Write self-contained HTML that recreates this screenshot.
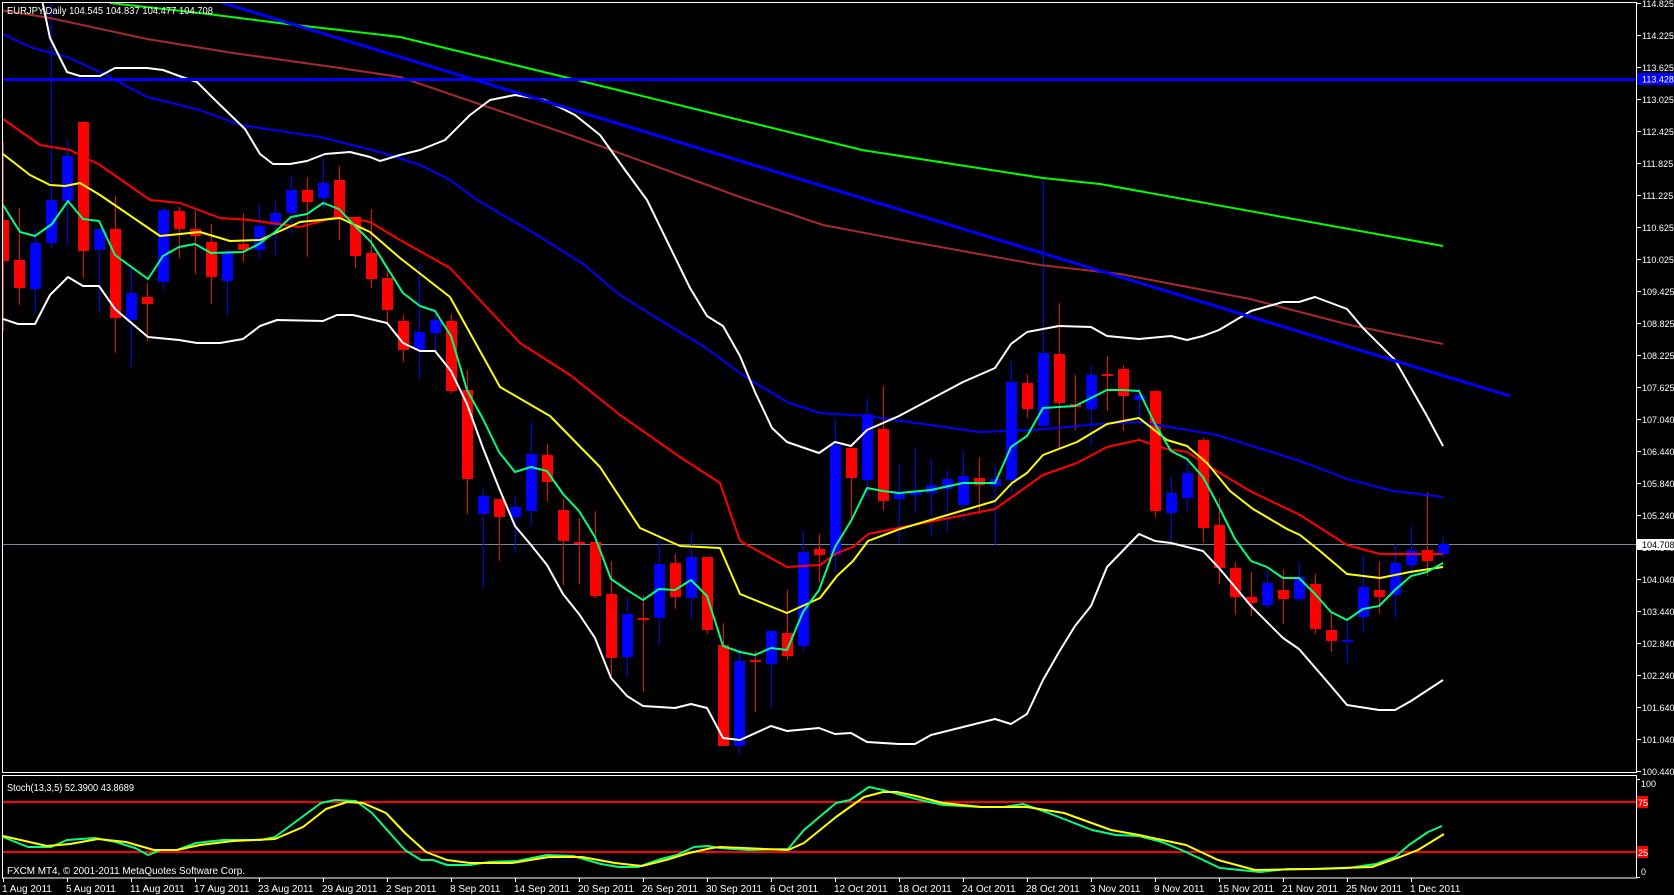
<!DOCTYPE html>
<html><head><meta charset="utf-8"><style>
html,body{margin:0;padding:0;background:#000;overflow:hidden}
svg{display:block}
text{font-family:"Liberation Sans",sans-serif;fill:#fff}
</style></head><body>
<svg width="1674" height="895" viewBox="0 0 1674 895" xmlns="http://www.w3.org/2000/svg">
<rect width="1674" height="895" fill="#000"/>
<defs><clipPath id="mc"><rect x="3" y="3" width="1633" height="769"/></clipPath></defs>
<g clip-path="url(#mc)">
<line x1="2" y1="544.5" x2="1636" y2="544.5" stroke="#778899" stroke-width="1"/>
<path stroke="#ff0000" stroke-width="1" fill="none" d="M3.5 142V331M19.5 208V305M83.5 121V278M115.5 196V353M147.5 283V341M179.5 207V258M195.5 211V274M211.5 224V304M243.5 213V262M307.5 177V257M339.5 166V240M355.5 217V268M371.5 209V288M387.5 267V323M403.5 315V362M451.5 314V393M467.5 370V514M499.5 499V561M547.5 444V501M563.5 499V585M579.5 518V584M595.5 511V598M611.5 561V676M643.5 595V692M675.5 554V609M707.5 557V634M723.5 623V746M755.5 651V712M787.5 590V660M819.5 534V582M851.5 448V519M883.5 386V511M979.5 457V514M1027.5 375V418M1059.5 303V448M1075.5 375V430M1107.5 356V411M1123.5 365V431M1155.5 390V517M1203.5 438V543M1219.5 498V584M1235.5 562V615M1251.5 572V616M1283.5 570V624M1315.5 574V634M1331.5 611V652M1379.5 561V613M1427.5 492V576"/>
<path stroke="#0000ff" stroke-width="1" fill="none" d="M35.5 230V313M51.5 0V248M67.5 140V245M99.5 229V312M131.5 268V367M163.5 207V290M227.5 249V315M259.5 204V259M275.5 201V256M291.5 175V234M323.5 159V209M419.5 264V379M435.5 309V351M483.5 489V588M515.5 497V553M531.5 422V525M627.5 597V677M659.5 532V645M691.5 533V619M739.5 647V755M771.5 630V708M803.5 530V651M835.5 419V572M867.5 398V498M899.5 464V543M915.5 447V513M931.5 459V536M947.5 470V532M963.5 451V521M995.5 467V545M1011.5 361V493M1043.5 178V426M1091.5 365V446M1139.5 388V420M1171.5 477V543M1187.5 459V511M1267.5 570V609M1299.5 563V601M1347.5 622V664M1363.5 555V633M1395.5 544V618M1411.5 526V574M1443.5 537V557"/>
<path fill="#ff0000" d="M-2 220h11v41h-11zM14 260h11v28h-11zM78 122h11v129h-11zM110 229h11v89h-11zM142 297h11v7h-11zM174 211h11v18h-11zM190 229h11v7h-11zM206 242h11v35h-11zM238 244h11v6h-11zM302 190h11v12h-11zM334 180h11v37h-11zM350 217h11v39h-11zM366 253h11v26h-11zM382 278h11v32h-11zM398 321h11v29h-11zM446 321h11v70h-11zM462 390h11v89h-11zM494 499h11v18h-11zM542 455h11v27h-11zM558 510h11v31h-11zM574 542h11v2h-11zM590 542h11v54h-11zM606 594h11v64h-11zM638 618h11v2h-11zM670 563h11v34h-11zM702 557h11v73h-11zM718 645h11v101h-11zM750 660h11v2h-11zM782 633h11v23h-11zM814 549h11v6h-11zM846 448h11v30h-11zM878 429h11v72h-11zM974 478h11v7h-11zM1022 383h11v26h-11zM1054 354h11v49h-11zM1070 404h11v3h-11zM1102 374h11v2h-11zM1118 369h11v27h-11zM1150 391h11v120h-11zM1198 440h11v88h-11zM1214 525h11v43h-11zM1230 568h11v29h-11zM1246 597h11v6h-11zM1278 590h11v9h-11zM1310 584h11v45h-11zM1326 630h11v11h-11zM1374 590h11v7h-11zM1422 550h11v11h-11z"/>
<path fill="#0000ff" d="M30 243h11v46h-11zM46 200h11v43h-11zM62 156h11v45h-11zM94 229h11v21h-11zM126 293h11v27h-11zM158 210h11v72h-11zM222 253h11v28h-11zM254 226h11v24h-11zM270 213h11v12h-11zM286 190h11v23h-11zM318 183h11v15h-11zM414 332h11v18h-11zM430 320h11v13h-11zM478 496h11v18h-11zM510 507h11v10h-11zM526 454h11v57h-11zM622 614h11v43h-11zM654 564h11v54h-11zM686 557h11v41h-11zM734 661h11v85h-11zM766 631h11v33h-11zM798 552h11v94h-11zM830 445h11v110h-11zM862 414h11v66h-11zM894 493h11v6h-11zM910 492h11v3h-11zM926 485h11v8h-11zM942 479h11v10h-11zM958 476h11v29h-11zM990 479h11v7h-11zM1006 382h11v98h-11zM1038 353h11v73h-11zM1086 375h11v34h-11zM1134 395h11v5h-11zM1166 493h11v20h-11zM1182 473h11v25h-11zM1262 583h11v22h-11zM1294 577h11v22h-11zM1342 640h11v2h-11zM1358 587h11v30h-11zM1390 563h11v32h-11zM1406 550h11v15h-11zM1438 544h11v10h-11z"/>
<g fill="none" stroke-width="2" stroke-linejoin="round">
<polyline stroke="#00ff00" points="110,3 200,13 287,24 400,37 630,93 862,150 1043,178 1100,184 1443,246"/>
<polyline stroke="#a52a2a" points="0,10 50,18 147,39 233,53 333,67 400,77 570,135 740,197 823,225 907,241 1040,265 1120,274 1250,299 1350,325 1443,344"/>
<polyline stroke="#0000ff" points="0,33 33,48 67,57 100,72 147,97 200,110 240,125 320,137 380,152 420,165 450,180 477,200 537,235 583,264 620,295 660,320 703,346 747,378 787,402 820,413 867,416 980,432 1033,430 1100,424 1139,422 1217,435 1300,461 1347,479 1393,491 1443,497"/>
<polyline stroke="#ff0000" points="3,119 40,145 70,150 100,165 150,200 180,203 220,218 250,220 300,227 340,216 370,222 400,240 450,268 520,343 570,375 620,415 680,457 720,483 740,541 787,567 820,565 837,553 853,547 868,534 995,509 1012,497 1043,475 1077,463 1107,447 1139,440 1167,449 1187,452 1210,467 1250,491 1300,515 1347,545 1380,554 1443,554"/>
<polyline stroke="#ffff00" points="3,154 30,175 50,185 65,186 80,183 100,195 160,236 200,232 230,241 260,240 300,222 340,218 370,232 400,258 450,297 500,387 550,416 600,467 640,528 680,546 720,548 740,594 787,613 820,598 837,576 853,561 868,541 900,529 995,501 1012,483 1027,473 1043,455 1077,442 1107,424 1139,418 1167,440 1187,446 1207,463 1230,491 1253,509 1287,529 1300,535 1320,551 1347,574 1380,578 1410,572 1443,567"/>
<polyline stroke="#00ff7f" points="3,205 20,232 35,236 52,224 68,201 83,219 99,221 115,255 148,279 163,256 179,247 195,244 211,253 243,252 259,244 275,232 291,217 307,214 323,203 339,209 355,226 371,242 403,293 420,306 435,311 451,336 467,390 483,419 499,452 515,472 531,467 547,471 563,494 579,511 595,537 611,579 627,590 643,600 659,589 675,590 691,580 707,596 723,646 740,652 755,655 771,648 787,650 803,612 819,590 835,547 851,521 867,488 883,491 899,493 931,490 963,483 995,483 1011,447 1027,436 1043,408 1075,406 1091,398 1107,390 1123,390 1139,391 1155,424 1171,451 1187,459 1203,477 1219,507 1235,539 1251,561 1267,567 1283,578 1299,578 1315,594 1331,612 1347,620 1363,609 1379,606 1395,590 1411,576 1427,572 1443,563"/>
<polyline stroke="#ffffff" points="42,0 50,38 67,72 80,76 100,76 115,68 147,68 163,70 182,77 197,82 215,100 245,129 260,154 273,164 290,164 307,161 325,154 350,152 370,157 380,161 400,155 420,150 445,140 470,115 490,100 515,95 545,100 575,115 600,135 625,170 647,200 690,288 707,316 723,326 740,356 755,392 772,428 787,442 819,453 835,442 851,446 867,430 899,416 931,399 963,382 995,368 1011,344 1027,332 1059,326 1091,327 1107,336 1139,339 1171,336 1187,340 1203,336 1219,330 1251,311 1283,302 1299,302 1315,297 1347,309 1363,328 1395,360 1411,388 1427,416 1443,446"/>
<polyline stroke="#ffffff" points="3,319 18,324 35,324 50,295 68,277 83,286 99,286 115,309 148,337 179,340 197,343 220,343 243,339 260,326 277,320 323,321 337,315 353,315 370,319 387,323 403,343 420,351 435,351 451,371 467,404 483,448 499,488 515,526 531,545 547,565 563,594 579,614 595,638 611,678 627,696 643,706 675,708 691,704 707,708 723,738 740,740 771,726 787,731 819,728 835,734 851,733 867,742 899,744 915,744 931,735 963,727 995,719 1011,724 1027,714 1043,680 1059,652 1075,626 1091,606 1107,567 1139,534 1155,541 1171,543 1203,551 1219,568 1251,606 1283,638 1299,649 1331,686 1347,705 1379,710 1395,710 1411,701 1443,680"/>
</g>
<line x1="220" y1="2" x2="1510" y2="396" stroke="#0000ff" stroke-width="3"/>
<line x1="2" y1="79.5" x2="1636" y2="79.5" stroke="#0000ff" stroke-width="3"/>
</g>
<rect x="2.5" y="2.5" width="1634" height="770" fill="none" stroke="#fff" stroke-width="1"/>
<rect x="2.5" y="775.5" width="1634" height="102.5" fill="none" stroke="#fff" stroke-width="1"/>
<text x="7" y="14" font-size="10" textLength="206" lengthAdjust="spacingAndGlyphs" fill="#e8e8e8">EURJPY,Daily  104.545 104.837 104.477 104.708</text>
<g stroke="#fff" stroke-width="1">
<path d="M1636 3.5h5M1636 35.5h5M1636 67.5h5M1636 99.5h5M1636 131.5h5M1636 163.5h5M1636 195.5h5M1636 227.5h5M1636 259.5h5M1636 291.5h5M1636 323.5h5M1636 355.5h5M1636 387.5h5M1636 419.5h5M1636 451.5h5M1636 483.5h5M1636 515.5h5M1636 547.5h5M1636 579.5h5M1636 611.5h5M1636 643.5h5M1636 675.5h5M1636 707.5h5M1636 739.5h5M1636 771.5h5"/>
</g>
<g font-size="9">
<text x="1642" y="7">114.825</text><text x="1642" y="39">114.225</text><text x="1642" y="71">113.625</text>
<text x="1642" y="103">113.025</text><text x="1642" y="135">112.425</text><text x="1642" y="167">111.825</text>
<text x="1642" y="199">111.225</text><text x="1642" y="231">110.625</text><text x="1642" y="263">110.025</text>
<text x="1642" y="295">109.425</text><text x="1642" y="327">108.825</text><text x="1642" y="359">108.225</text>
<text x="1642" y="391">107.625</text><text x="1642" y="423">107.040</text><text x="1642" y="455">106.440</text>
<text x="1642" y="487">105.840</text><text x="1642" y="519">105.240</text><text x="1642" y="551">104.640</text>
<text x="1642" y="583">104.040</text><text x="1642" y="615">103.440</text><text x="1642" y="647">102.840</text>
<text x="1642" y="679">102.240</text><text x="1642" y="711">101.640</text><text x="1642" y="743">101.040</text>
<text x="1642" y="775">100.440</text>
</g>
<rect x="1637" y="73" width="37" height="12" fill="#0000ff"/>
<text x="1642" y="82.5" font-size="9" fill="#fff">113.428</text>
<rect x="1637" y="539" width="37" height="11" fill="#fff"/>
<text x="1642" y="548" font-size="9" style="fill:#000">104.708</text>
<line x1="3" y1="802" x2="1636" y2="802" stroke="#ff0000" stroke-width="2"/>
<line x1="3" y1="852" x2="1636" y2="852" stroke="#ff0000" stroke-width="2"/>
<g fill="none" stroke-width="2" stroke-linejoin="round">
<polyline stroke="#00ff7f" points="3,837 28,847 51,847 67,840 95,838 116,842 135,848 148,855 161,850 177,850 196,843 223,840 261,840 275,837 298,820 321,803 335,800 356,801 372,813 405,850 421,860 433,860 447,865 470,865 489,862 517,861 547,855 573,856 601,864 619,867 638,867 661,859 677,855 694,847 708,846 720,848 748,850 788,849 804,830 836,803 850,800 869,787 883,790 916,799 943,805 981,807 1004,807 1023,804 1046,812 1092,830 1116,835 1139,836 1162,842 1186,852 1220,868 1260,872 1288,869 1321,869 1348,868 1376,864 1395,857 1409,845 1428,832 1442,826"/>
<polyline stroke="#ffff00" points="3,836 47,846 70,844 98,839 126,842 154,850 177,850 200,845 233,841 275,839 303,827 326,809 347,802 363,803 386,813 405,833 426,852 447,860 470,863 512,863 549,857 582,857 615,863 642,866 666,860 689,853 712,848 720,847 788,850 804,843 836,817 864,797 883,792 897,792 916,796 943,803 981,807 1027,807 1064,813 1111,830 1139,835 1186,845 1218,860 1255,870 1311,869 1372,867 1400,857 1418,850 1444,834"/>
</g>
<text x="7" y="791" font-size="10" textLength="127" lengthAdjust="spacingAndGlyphs">Stoch(13,3,5) 52.3900 43.8689</text>
<text x="7" y="874" font-size="10" textLength="238" lengthAdjust="spacingAndGlyphs">FXCM MT4, © 2001-2011 MetaQuotes Software Corp.</text>
<rect x="1637" y="796" width="11" height="12" fill="#ff0000"/>
<text x="1638" y="806" font-size="9">75</text>
<rect x="1637" y="846" width="11" height="12" fill="#ff0000"/>
<text x="1638" y="856" font-size="9">25</text>
<text x="1641" y="787" font-size="9">100</text>
<text x="1641" y="875" font-size="9">0</text>
<path stroke="#fff" d="M1636 779.5h4M1636 877.5h4"/>
<path stroke="#fff" stroke-width="1" d="M3.5 878v4M67.5 878v4M131.5 878v4M195.5 878v4M259.5 878v4M323.5 878v4M387.5 878v4M451.5 878v4M515.5 878v4M579.5 878v4M643.5 878v4M707.5 878v4M771.5 878v4M835.5 878v4M899.5 878v4M963.5 878v4M1027.5 878v4M1091.5 878v4M1155.5 878v4M1219.5 878v4M1283.5 878v4M1347.5 878v4M1411.5 878v4"/>
<g font-size="10">
<text x="2" y="892">1 Aug 2011</text><text x="66" y="892">5 Aug 2011</text><text x="130" y="892">11 Aug 2011</text>
<text x="194" y="892">17 Aug 2011</text><text x="258" y="892">23 Aug 2011</text><text x="322" y="892">29 Aug 2011</text>
<text x="386" y="892">2 Sep 2011</text><text x="450" y="892">8 Sep 2011</text><text x="514" y="892">14 Sep 2011</text>
<text x="578" y="892">20 Sep 2011</text><text x="642" y="892">26 Sep 2011</text><text x="706" y="892">30 Sep 2011</text>
<text x="770" y="892">6 Oct 2011</text><text x="834" y="892">12 Oct 2011</text><text x="898" y="892">18 Oct 2011</text>
<text x="962" y="892">24 Oct 2011</text><text x="1026" y="892">28 Oct 2011</text><text x="1090" y="892">3 Nov 2011</text>
<text x="1154" y="892">9 Nov 2011</text><text x="1218" y="892">15 Nov 2011</text><text x="1282" y="892">21 Nov 2011</text>
<text x="1346" y="892">25 Nov 2011</text><text x="1410" y="892">1 Dec 2011</text>
</g>
</svg>
</body></html>
